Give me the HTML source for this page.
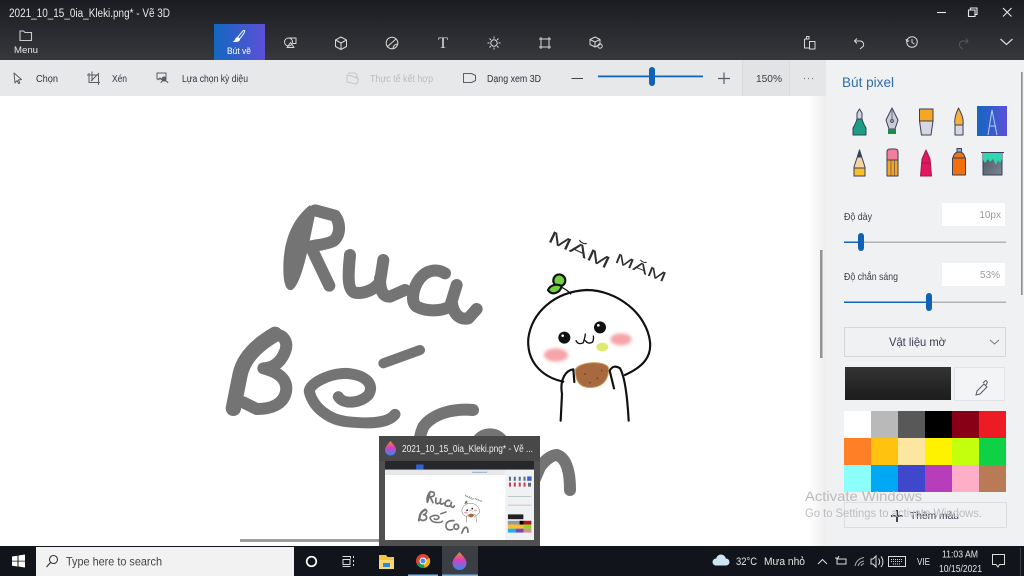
<!DOCTYPE html>
<html lang="vi">
<head>
<meta charset="utf-8">
<title>2021_10_15_0ia_Kleki.png* - Vẽ 3D</title>
<style>
html,body{margin:0;padding:0;width:1024px;height:576px;overflow:hidden;background:#fff}
svg{display:block}
text{font-family:"Liberation Sans","Noto Sans CJK SC",sans-serif}
</style>
</head>
<body>
<svg xmlns="http://www.w3.org/2000/svg" width="1024" height="576" viewBox="0 0 1024 576">
<title>Rua Bé Con, MĂM MĂM</title>
<defs>
<linearGradient id="tb" x1="0" y1="0" x2="0" y2="1"><stop offset="0" stop-color="#1b1c21"/><stop offset="1" stop-color="#36383c"/></linearGradient>
<linearGradient id="sel" x1="0" y1="0" x2="1" y2="0"><stop offset="0" stop-color="#1268bf"/><stop offset="1" stop-color="#5c50d8"/></linearGradient>
<linearGradient id="swatch" x1="0" y1="0" x2="0" y2="1"><stop offset="0" stop-color="#333"/><stop offset="1" stop-color="#1c1c1c"/></linearGradient>
<linearGradient id="drop" x1="0" y1="0" x2="0" y2="1"><stop offset="0" stop-color="#f58a1f"/><stop offset=".45" stop-color="#d63fc0"/><stop offset="1" stop-color="#2a8df0"/></linearGradient>
<linearGradient id="shad" x1="0" y1="0" x2="1" y2="0"><stop offset="0" stop-color="#000" stop-opacity="0"/><stop offset="1" stop-color="#000" stop-opacity=".07"/></linearGradient>
<linearGradient id="bucket" x1="0" y1="0" x2="1" y2="1"><stop offset="0" stop-color="#4c5560"/><stop offset="1" stop-color="#7b8794"/></linearGradient>
<filter id="blur" x="-30%" y="-30%" width="160%" height="160%"><feGaussianBlur stdDeviation="5"/></filter>
<g id="art">
  <g transform="translate(220 195) scale(.33333)" fill="none" stroke="#747474" stroke-width="36" stroke-linecap="round" stroke-linejoin="round">
    <path d="M270 30C220 70 190 130 190 220C190 270 200 288 215 285C235 275 250 220 262 170L285 60Z" fill="#747474" stroke="none"/>
    <path d="M285 46L345 62C362 85 362 120 340 138C310 152 280 150 272 155L328 272"/>
    <path d="M390 180C385 230 380 285 405 293C430 297 465 285 480 260L490 195M480 250C480 290 490 305 510 305L555 285"/>
    <path d="M675 235C650 220 620 225 600 250C580 275 570 320 590 335C620 350 660 350 690 335L710 270M695 320C700 360 720 375 745 370L770 342"/>
    <path d="M165 418C110 450 70 490 60 540L40 640" stroke-width="46"/>
    <path d="M165 418C195 420 205 445 195 470C180 510 150 520 130 520C170 530 205 550 198 590C190 630 150 642 110 642L70 622"/>
    <path d="M490 505L600 465" stroke-width="30"/>
    <path d="M355 605C370 630 420 625 445 600C465 570 440 540 380 535C320 535 265 570 268 590C280 640 330 675 380 680C430 685 500 690 525 658" stroke-width="33"/>
    <path d="M759 645C700 640 640 655 610 695C590 740 595 790 620 815C650 840 700 840 735 825"/>
    <ellipse cx="810" cy="771" rx="48" ry="53"/>
    <path d="M924 900L960 816C975 795 995 780 1011 780C1040 790 1050 831 1050 885"/>
  </g>
  <g transform="translate(510 210) scale(.33333)" fill="none" stroke="#111" stroke-width="6.500" stroke-linecap="round" stroke-linejoin="round">
    <ellipse cx="138" cy="435" rx="36" ry="20" fill="#f5a5aa" stroke="none" filter="url(#blur)"/>
    <ellipse cx="333" cy="388" rx="32" ry="18" fill="#f5a5aa" stroke="none" filter="url(#blur)"/>
    <path d="M160 515C90 500 50 450 55 385C65 310 130 245 230 240C320 240 410 310 420 395C425 440 400 470 345 495"/>
    <path d="M155 232Q172 240 182 252" stroke-width="4"/>
    <path d="M130 215C128 192 155 185 165 205C170 225 150 235 135 226Z" fill="#72d043"/>
    <path d="M114 240C120 225 140 220 155 228C150 250 125 258 114 240Z" fill="#72d043"/>
    <circle cx="163" cy="383" r="18" fill="#111" stroke="none"/><circle cx="270" cy="352" r="18" fill="#111" stroke="none"/>
    <circle cx="158" cy="377" r="4" fill="#fff" stroke="none"/><circle cx="265" cy="346" r="4" fill="#fff" stroke="none"/>
    <path d="M198 392Q205 406 220 398Q226 378 226 372M226 392Q235 404 248 396Q252 385 250 378" stroke-width="4"/>
    <ellipse cx="277" cy="411" rx="18" ry="13" fill="#dfe96f" stroke="none"/>
    <path d="M196 478C210 455 280 450 295 472C298 495 288 528 250 532C215 536 195 520 196 478Z" fill="#a8693e" stroke="#c9a05a" stroke-width="3"/>
    <g fill="#6e3e20" stroke="none"><circle cx="225" cy="492" r="2.500"/><circle cx="262" cy="505" r="2.500"/><circle cx="240" cy="518" r="2.500"/><circle cx="275" cy="482" r="2.500"/></g>
    <path d="M152 632L156 552C148 505 170 480 190 478L193 516"/>
    <path d="M312 535L299 482Q310 462 330 475C345 500 352 560 356 632"/>
  </g>
  <text transform="translate(547 241) rotate(25)" font-size="17" fill="#2f2f2f" textLength="66" lengthAdjust="spacingAndGlyphs">MĂM</text>
  <text transform="translate(614 262) rotate(22)" font-size="14" fill="#2f2f2f" textLength="54" lengthAdjust="spacingAndGlyphs">MĂM</text>
</g>
</defs>

<!-- base -->
<rect width="1024" height="576" fill="#fff"/>
<use href="#art"/>
<!-- scrollbars -->
<rect x="820" y="250" width="2.500" height="108" fill="#9a9a9a"/>
<rect x="240" y="539" width="142" height="3" fill="#9c9c9c"/>

<!-- title / top -->
<rect width="1024" height="60" fill="url(#tb)"/>
<text x="9" y="17" font-size="11.500" fill="#e8e8e8" textLength="161" lengthAdjust="spacingAndGlyphs">2021_10_15_0ia_Kleki.png* - Vẽ 3D</text>
<g stroke="#e8e8e8" fill="none" stroke-width="1.100">
  <path d="M937 12.500h9"/>
  <path d="M968.500 10h6.500v6.500h-6.500zM970.500 10V8h6.500v6.500H975"/>
  <path d="M1003 8l8.500 8.500M1011.500 8l-8.500 8.500"/>
  <path d="M20 31h3.500l1.500 1.500h6.500v8H20z" stroke="#ccc"/>
</g>
<text x="14" y="53" font-size="9.500" fill="#e6e6e6" textLength="24" lengthAdjust="spacingAndGlyphs">Menu</text>
<rect x="214" y="24" width="51" height="36" fill="url(#sel)"/>
<g fill="none" stroke="#fff" stroke-width="1"><path d="M244.500 30.500c.8.800-.5 3-5 8.500l-2-1.500c4-5 6-7.800 7-7z"/><path d="M236.500 38c2-.5 3 .5 3 1.500-.5 2-3 2-5.500 2 1.500-1 1.500-2.500 2.500-3.500z" fill="#fff"/></g>
<text x="227" y="54" font-size="9.500" fill="#fff" textLength="24" lengthAdjust="spacingAndGlyphs">Bút vẽ</text>

<!-- top icons -->
<g fill="none" stroke="#d8d8d8" stroke-width="1" stroke-linejoin="round">
  <circle cx="288.500" cy="42" r="4"/><path d="M289 38h7v5.500h-3M287 47.500l3.500-5 3.500 5z"/>
  <path d="M341 37l5.500 3v6.500l-5.500 3-5.500-3V40zM335.500 40l5.500 3 5.500-3M341 43v6.500"/>
  <circle cx="392" cy="43" r="5.800"/><path d="M387 47l9-8M393 49c0-3 2-5 5-5"/>
  <circle cx="494" cy="43" r="3.200"/><path d="M494 36.500v2M494 47.500v2M487.500 43h2M498.500 43h2M489.500 38.500l1.500 1.500M497 46l1.500 1.500M498.500 38.500L497 40M491 46l-1.500 1.500"/>
  <path d="M541 39h8v8h-8zM541 37v2h-2M549 37v2h2M541 49v-2h-2M549 49v-2h2"/>
  <path d="M595 37l5 2.500v5l-5 2.500-5-2.500v-5zM590 39.500l5 2.500 5-2.500M595 42v5"/><circle cx="600" cy="46" r="2.200"/>
  <path d="M804.500 39h4.500v-2.500h-2.500V39M804.500 39v9h5M809.500 41.500h5.500v7.500h-5.500z"/>
  <path d="M857 38.500l-2.500 2.500 2.500 2.500M855 41h5c3 0 4 2.500 3.500 5l-3.500 3"/>
  <circle cx="912" cy="42" r="5.300"/><path d="M906 39l.8 2.500 2.500-.8M912 39v3.500l2.500 1.500"/>
  <path d="M966 38.500l2 2.500-2.500 2.500M968 41h-5c-3 0-4 2.500-3.500 5l3 3" stroke="#55575b"/>
  <path d="M1000.500 39l6 5.500 6-5.500" stroke-width="1.200"/>
</g>
<text x="443" y="48" font-size="16" text-anchor="middle" fill="#ddd" style="font-family:'Liberation Serif',serif">T</text>

<!-- toolbar -->
<rect y="60" width="826" height="36" fill="#e7e8e9"/>
<rect x="743" y="60" width="47" height="36" fill="#e2e3e4"/>
<path d="M742.500 60v36M789.500 60v36" stroke="#d9dadb"/>
<rect x="790" y="60" width="36" height="36" fill="#e5e6e7"/>
<g fill="none" stroke="#5a5d68" stroke-width="1" stroke-linejoin="round">
  <path d="M14 73l7.500 6.500-3.200.5 1.500 3-1.300.5-1.500-3L15 83z"/>
  <path d="M89 73v9.500h11M92 71.500V81M87 75h11.500V85M91 81l8-8"/>
  <path d="M157 73h9v6h-9zM158 80l2-2 2 2"/><circle cx="164" cy="79" r="2" fill="#5a5d68"/><path d="M161 83c0-3 6-3 7 0"/>
  <path d="M348 73h7l2 2v3h-2M347 75v7l9 2 2-2v-4l-10-3z" stroke="#c4c6c9"/>
  <path d="M463.500 73.500h8l4 2v5l-4 2h-8z"/>
  <path d="M571.500 78.500h11.500" stroke="#444"/>
  <path d="M724 72.500v11.500M718 78.500h12" stroke-width="1.200"/>
  <path d="M804 78.500h.8M808 78.500h.8M812 78.500h.8" stroke-width="1.200"/>
</g>
<g font-size="10" fill="#2f3140">
  <text x="36" y="82" textLength="22" lengthAdjust="spacingAndGlyphs">Chọn</text>
  <text x="112" y="82" textLength="15" lengthAdjust="spacingAndGlyphs">Xén</text>
  <text x="182" y="82" textLength="66" lengthAdjust="spacingAndGlyphs">Lựa chọn kỳ diệu</text>
  <text x="370" y="82" textLength="63" lengthAdjust="spacingAndGlyphs" fill="#b9bbbf">Thực tế kết hợp</text>
  <text x="487" y="82" textLength="54" lengthAdjust="spacingAndGlyphs">Dạng xem 3D</text>
</g>
<text x="756" y="82" font-size="10.500" fill="#3a3c48" textLength="26" lengthAdjust="spacingAndGlyphs">150%</text>
<rect x="598" y="75.500" width="105" height="1.800" fill="#1565b5"/>
<rect x="649" y="67" width="6" height="19" rx="3" fill="#0f62b5"/>

<!-- panel -->
<rect x="808" y="96" width="18" height="450" fill="url(#shad)"/>
<rect x="826" y="60" width="198" height="486" fill="#f0f1f3"/>
<rect x="1021" y="72" width="1.600" height="223" fill="#8d8d8d"/>
<text x="842" y="87" font-size="14" fill="#2f6cab" textLength="52" lengthAdjust="spacingAndGlyphs">Bút pixel</text>

<!-- pens row 1 -->
<g stroke="#39405a" stroke-width="1" stroke-linejoin="round">
  <path d="M853 135v-7q3-5 4-9h5q1 4 4 9v7z" fill="#1a9e84"/>
  <path d="M857 119v-6l2.500-4 2.500 4v6z" fill="#cfd3dc"/>
  <path d="M892 108l6 12-3 9h-6l-3-9z" fill="#c9ccd8"/>
  <rect x="888" y="129" width="8" height="5" fill="#1e8a4d" stroke="none"/><circle cx="892" cy="121" r="1.400" fill="none"/><path d="M892 110v10" stroke-width=".7"/>
  <rect x="919.500" y="109" width="13.500" height="12" fill="#f5a623"/>
  <path d="M919.500 121H933l-2 14h-9.500z" fill="#d5d7e2"/>
  <path d="M958.500 108c-3.500 7-4.500 12-3.500 17h8c1-7-2-12-4.500-17z" fill="#f8b03c"/>
  <rect x="955" y="125" width="8" height="10" fill="#d5d7e2"/>
</g>
<rect x="977" y="106" width="30" height="30" fill="url(#sel)"/>
<path d="M992 110l-4 25M992 110l5 25M989 126h7" fill="none" stroke="#b4cdf5" stroke-width="1"/>
<!-- pens row 2 -->
<g stroke="#39405a" stroke-width="1" stroke-linejoin="round">
  <path d="M859.500 150l-5.500 17v9h11v-9z" fill="#f2d3a8"/>
  <path d="M854 168h11v8h-11z" fill="#f5c02a"/>
  <path d="M859.500 150l-2 7h4z" fill="#39405a"/>
  <path d="M887 160v-8q0-3 3-3h5q3 0 3 3v8z" fill="#f07f9b"/>
  <rect x="887" y="160" width="11" height="16" fill="#f5a623"/><path d="M891 160v16M894.500 160v16" stroke-width=".6"/>
  <path d="M926 150l-4 9-1.500 17h11l-1.500-17z" fill="#e2185f" stroke="#9c1a50"/>
  <path d="M921 163h10" stroke="#9c1a50"/>
  <rect x="957" y="148.500" width="4.500" height="4" fill="#aab"/>
  <path d="M953 158q1-6 6-6t6 6z" fill="#e8751a"/>
  <rect x="952.500" y="158" width="13" height="17" fill="#f26f0a"/>
  <rect x="983" y="153" width="19" height="22" fill="url(#bucket)"/>
  <path d="M983 153h19v6l-2 4-2-3-2 5-3-6-3 3-2-3-3 4-2-3z" fill="#2fd6b0" stroke="none"/>
  <path d="M981 152.500h23"/>
</g>

<!-- sliders & inputs -->
<text x="844" y="220" font-size="10" fill="#3a3c48" textLength="28" lengthAdjust="spacingAndGlyphs">Độ dày</text>
<rect x="942" y="203" width="63" height="23" fill="#fff"/>
<text x="1001" y="218" font-size="10" fill="#9a9a9a" text-anchor="end">10px</text>
<rect x="844" y="241.500" width="162" height="1.500" fill="#b3b3b3"/><rect x="844" y="241.500" width="17" height="1.500" fill="#1565b5"/>
<rect x="858" y="233" width="6" height="18" rx="3" fill="#0f62b5"/>
<text x="844" y="280" font-size="10" fill="#3a3c48" textLength="54" lengthAdjust="spacingAndGlyphs">Độ chắn sáng</text>
<rect x="942" y="263" width="63" height="23" fill="#fff"/>
<text x="1000" y="278" font-size="10" fill="#9a9a9a" text-anchor="end">53%</text>
<rect x="844" y="301.500" width="162" height="1.500" fill="#b3b3b3"/><rect x="844" y="301.500" width="85" height="1.500" fill="#1565b5"/>
<rect x="926" y="293" width="6" height="18" rx="3" fill="#0f62b5"/>

<!-- dropdown -->
<rect x="844.500" y="327.500" width="161" height="29" fill="none" stroke="#d6d7da"/>
<text x="889" y="346" font-size="12" fill="#3a3c50" textLength="57" lengthAdjust="spacingAndGlyphs">Vật liệu mờ</text>
<path d="M990 340l4.500 4 4.500-4" fill="none" stroke="#777" stroke-width="1"/>

<!-- colour -->
<rect x="845" y="367" width="106" height="33" fill="url(#swatch)"/>
<rect x="954.500" y="367.500" width="50" height="33" fill="#f3f4f6" stroke="#e3e4e7"/>
<path d="M976 395l1-4 7-7 3 3-7 7zM983 383l2-2c1-1 3 1 2 2l-1 2" fill="none" stroke="#555a66" stroke-width="1"/>

<!-- palette -->
<g>
<rect x="844" y="411" width="27" height="27" fill="#fff"/><rect x="871" y="411" width="27" height="27" fill="#b9b9b9"/><rect x="898" y="411" width="27" height="27" fill="#585858"/><rect x="925" y="411" width="27" height="27" fill="#000"/><rect x="952" y="411" width="27" height="27" fill="#880015"/><rect x="979" y="411" width="27" height="27" fill="#ed1c24"/>
<rect x="844" y="438" width="27" height="27" fill="#ff7f27"/><rect x="871" y="438" width="27" height="27" fill="#ffc20e"/><rect x="898" y="438" width="27" height="27" fill="#fde6a0"/><rect x="925" y="438" width="27" height="27" fill="#fff200"/><rect x="952" y="438" width="27" height="27" fill="#c4ff0e"/><rect x="979" y="438" width="27" height="27" fill="#0ed145"/>
<rect x="844" y="465" width="27" height="27" fill="#8cfffb"/><rect x="871" y="465" width="27" height="27" fill="#00a8f3"/><rect x="898" y="465" width="27" height="27" fill="#3f48cc"/><rect x="925" y="465" width="27" height="27" fill="#b83dba"/><rect x="952" y="465" width="27" height="27" fill="#ffaec8"/><rect x="979" y="465" width="27" height="27" fill="#b97a57"/>
</g>

<!-- add colour -->
<rect x="844.500" y="502.500" width="162" height="25" fill="none" stroke="#dcdde0"/>
<path d="M897 510v12M891 516h12" stroke="#2f3140" stroke-width="1.800"/>
<text x="910" y="519" font-size="10.500" fill="#3a3c50" textLength="49" lengthAdjust="spacingAndGlyphs">Thêm màu</text>
<text x="805" y="501" font-size="14" fill="#bbb" textLength="117" lengthAdjust="spacingAndGlyphs">Activate Windows</text>
<text x="805" y="517" font-size="11.500" fill="#bdbdbf" textLength="177" lengthAdjust="spacingAndGlyphs">Go to Settings to activate Windows.</text>

<!-- thumbnail popup -->
<rect x="379" y="436" width="161" height="110" fill="#505050"/>
<rect x="379" y="436" width="161" height="25" fill="#484848"/>
<path d="M390.500 441c3 3.500 5.500 6 5.500 9a5.500 5.500 0 0 1-11 0c0-3 2.500-5.500 5.500-9z" fill="url(#drop)"/>
<text x="402" y="452" font-size="10" fill="#eee" textLength="131" lengthAdjust="spacingAndGlyphs">2021_10_15_0ia_Kleki.png* - Vẽ ...</text>
<svg x="385" y="461" width="149" height="79" viewBox="0 0 1024 543">
  <rect width="1024" height="543" fill="#fff"/>
  <use href="#art"/>
  <rect width="1024" height="60" fill="#26282c"/>
  <rect x="214" y="24" width="51" height="36" fill="#2f5fd0"/>
  <rect y="60" width="826" height="36" fill="#e7e8e9"/>
  <rect x="598" y="75" width="105" height="3" fill="#1565b5"/>
  <rect x="826" y="60" width="198" height="483" fill="#f0f1f3"/>
  <rect x="977" y="106" width="30" height="30" fill="#3f5fd0"/>
  <g fill="#50708a"><rect x="852" y="108" width="14" height="28"/><rect x="885" y="108" width="14" height="28"/><rect x="919" y="108" width="14" height="28"/><rect x="952" y="108" width="14" height="28"/></g>
  <g fill="#c04060"><rect x="852" y="148" width="14" height="28"/><rect x="885" y="148" width="14" height="28"/><rect x="919" y="148" width="14" height="28"/><rect x="952" y="148" width="14" height="28"/><rect x="983" y="150" width="20" height="26" fill="#5f6a75"/></g>
  <rect x="844" y="241" width="162" height="4" fill="#9aa"/><rect x="844" y="301" width="162" height="4" fill="#9aa"/>
  <rect x="845" y="367" width="106" height="33" fill="#222"/>
  <rect x="844" y="411" width="81" height="27" fill="#999"/><rect x="925" y="411" width="27" height="27" fill="#000"/><rect x="952" y="411" width="54" height="27" fill="#c01020"/>
  <rect x="844" y="438" width="162" height="27" fill="#ffc020"/><rect x="952" y="438" width="54" height="27" fill="#80e020"/>
  <rect x="844" y="465" width="54" height="27" fill="#20b0f0"/><rect x="898" y="465" width="54" height="27" fill="#7048c4"/><rect x="952" y="465" width="54" height="27" fill="#d89090"/>
</svg>

<!-- taskbar -->
<rect y="546" width="1024" height="30" fill="#11141a"/>
<g fill="#fff"><path d="M12 556.500l5.500-.8v5h-5.500zM18.500 555.500l6.500-1v6.200h-6.500zM12 561.500h5.500v5l-5.500-.8zM18.500 561.500H25v6l-6.500-1z"/></g>
<rect x="36" y="547" width="258" height="29" fill="#f2f2f2"/>
<g fill="none" stroke="#333" stroke-width="1.100"><circle cx="53.500" cy="559.500" r="4"/><path d="M50.500 562.500l-4 4.500"/></g>
<text x="66" y="565.500" font-size="12" fill="#444" textLength="96" lengthAdjust="spacingAndGlyphs">Type here to search</text>
<circle cx="311.500" cy="561.500" r="4.800" fill="none" stroke="#fff" stroke-width="1.700"/>
<g fill="none" stroke="#ddd" stroke-width="1"><path d="M342.500 556.500h8v2M342.500 566.500h8M343 559.500h7v5h-7zM353.500 556v2M353.500 560v2M353.500 564v2"/></g>
<path d="M379 555h7l1.500 2H394v12h-15z" fill="#f5c53f"/><path d="M379 560h15v9h-15z" fill="#f8d775"/><rect x="383" y="563" width="7" height="4" fill="#2a8dd8"/>
<circle cx="423" cy="561" r="7" fill="#db4437"/><path d="M423 561l6.500-3a7 7 0 0 1-5 9.800z" fill="#f4b400"/><path d="M423 561l1.500 6.800a7 7 0 0 1-7.600-3.800z" fill="#0f9d58"/><circle cx="423" cy="561" r="3" fill="#4a89f3" stroke="#fff"/>
<rect x="442" y="546" width="36" height="30" fill="#3b3e43"/>
<path d="M459.500 552c4 4.500 7 7.500 7 11a7 7 0 0 1-14 0c0-3.500 3-6.500 7-11z" fill="url(#drop)"/>
<rect x="408" y="574.500" width="30" height="1.500" fill="#76b9ed"/><rect x="442" y="574.500" width="36" height="1.500" fill="#76b9ed"/>
<g fill="#cfe4f5"><circle cx="716" cy="562" r="3.500"/><circle cx="721" cy="559.500" r="5"/><circle cx="726" cy="562" r="3.500"/><rect x="714" y="562" width="13" height="3.500" rx="1.700"/></g>
<g font-size="11" fill="#e4e4e4"><text x="736" y="565" textLength="21" lengthAdjust="spacingAndGlyphs">32°C</text><text x="764" y="565" textLength="41" lengthAdjust="spacingAndGlyphs">Mưa nhỏ</text></g>
<g fill="none" stroke="#ddd" stroke-width="1">
  <path d="M818 564l4.500-4.500 4.500 4.500"/>
  <rect x="837" y="559" width="9" height="5"/><path d="M835 558h3l1-2"/>
  <path d="M855 566c1-5 4-7.500 9-8.500M858 566c1-3 3-4.500 6-5M861 566c.5-1.500 1.500-2 3-2.500" stroke="#aaa"/>
  <path d="M871 559h2l3-3v11l-3-3h-2zM878.500 558.500c1.500 2 1.500 4.500 0 6.500M881 556.500c2.500 3 2.500 7.500 0 10.500"/>
  <rect x="888.500" y="556.500" width="17" height="10"/><path d="M891 559.500h12M891 561.500h12M893 564h8" stroke-dasharray="1 1"/>
  <path d="M992.500 554.500h12v10h-5l-1.500 2.500-2-2.500h-3.500z"/>
</g>
<text x="917" y="565" font-size="10" fill="#e4e4e4" textLength="13" lengthAdjust="spacingAndGlyphs">VIE</text>
<text x="942" y="557.500" font-size="10" fill="#e4e4e4" textLength="36" lengthAdjust="spacingAndGlyphs">11:03 AM</text>
<text x="939" y="572" font-size="10" fill="#e4e4e4" textLength="43" lengthAdjust="spacingAndGlyphs">10/15/2021</text>
<rect x="1020" y="548" width="1" height="28" fill="#3c3f44"/>
</svg>
</body>
</html>
